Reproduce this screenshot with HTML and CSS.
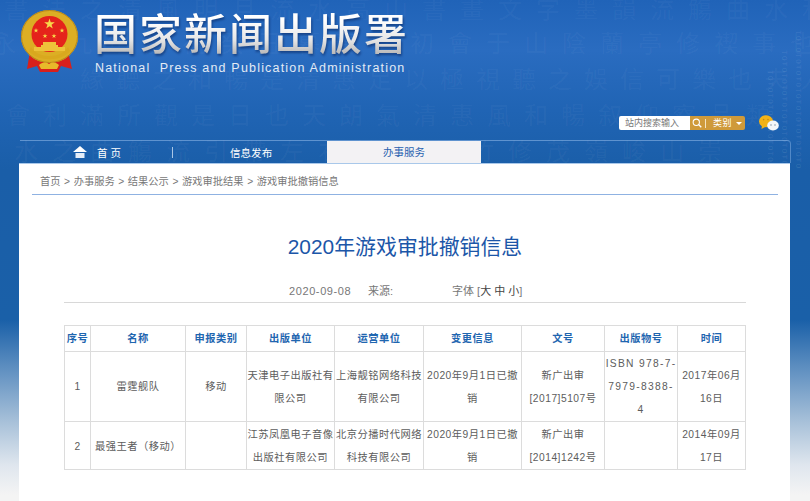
FILE: index.html
```html
<!DOCTYPE html>
<html lang="zh-CN">
<head>
<meta charset="utf-8">
<title>游戏审批撤销信息</title>
<link rel="stylesheet" href="styles.css">
</head>
<body>
<div class="page">
  <header class="masthead">
    <svg class="emblem" viewBox="0 0 58 64" aria-hidden="true">
      <defs>
        <polygon id="star" points="0,-1 .22,-.31 .95,-.31 .36,.12 .59,.81 0,.38 -.59,.81 -.36,.12 -.95,-.31 -.22,-.31" fill="#f7d94a"/>
      </defs>
      <path d="M10 42 L7 60 L17 57 L20 63 L38 63 L41 57 L52 60 L48 42 Z" fill="#d8201c"/>
      <ellipse cx="29.5" cy="27.5" rx="28.5" ry="26.5" fill="#dcae24"/>
      <ellipse cx="29.5" cy="27.5" rx="28" ry="26" fill="none" stroke="#b8881a" stroke-width="1"/>
      <ellipse cx="29.5" cy="25" rx="18" ry="18" fill="#e5231b"/>
      <use href="#star" transform="translate(29.5 15) scale(5.6)"/>
      <use href="#star" transform="translate(16 21.5) scale(2.6)"/>
      <use href="#star" transform="translate(25 27) scale(2.6)"/>
      <use href="#star" transform="translate(34 27) scale(2.6)"/>
      <use href="#star" transform="translate(42 21.5) scale(2.6)"/>
      <path d="M23 33 H36 V36 H38 V38 H45 V42 H14 V38 H21 V36 H23 Z" fill="#eec23a"/>
      <path d="M11 38 C17 50 42 50 48 38 L50 42 C42 53 17 53 9 42 Z" fill="#d9a81e"/>
      <path d="M19 56 C23 53 26 53 29 55 C32 53 35 53 39 56 L37 60 H21 Z" fill="#e8b92a"/>
    </svg>
    <div class="brand">
      <h1 class="brand-cn">国家新闻出版署</h1>
      <p class="brand-en">National  Press and Publication Administration</p>
    </div>
    <div class="tools">
      <div class="search">
        <span class="search-input">站内搜索输入</span>
        <span class="search-btn">
          <svg class="lens" viewBox="0 0 14 14" aria-hidden="true"><circle cx="6" cy="6" r="4.4" fill="none" stroke="#fff" stroke-width="1.5"/><path d="M9.2 9.2 L13 13" stroke="#fff" stroke-width="1.8"/></svg>
          <i class="search-sep"></i>
          <span class="search-cat">类别</span>
          <i class="caret"></i>
        </span>
      </div>
      <svg class="wechat" viewBox="0 0 20 16" aria-hidden="true">
        <ellipse cx="7" cy="6.2" rx="7" ry="6" fill="#f2b216"/>
        <path d="M3 10 L2.5 14 L7 11.5 Z" fill="#f2b216"/>
        <circle cx="4.6" cy="4.6" r=".8" fill="#c48a10"/><circle cx="9" cy="4.6" r=".8" fill="#c48a10"/>
        <ellipse cx="14" cy="10.5" rx="5.8" ry="5" fill="#f4f6f8"/>
        <circle cx="12" cy="10" r=".8" fill="#8a9aa8"/><circle cx="16" cy="10" r=".8" fill="#8a9aa8"/>
      </svg>
    </div>
  </header>

  <nav class="nav">
    <a class="nav-home">
      <svg class="house" viewBox="0 0 14 12" aria-hidden="true"><path d="M7 0 L14 6 H0 Z" fill="#fff"/><path d="M2.5 7 H11.5 V12 H2.5 Z" fill="#e6eef8"/></svg>
      <span class="nav-home-text">首 页</span>
    </a>
    <i class="nav-sep"></i>
    <a class="nav-info">信息发布</a>
    <a class="nav-active">办事服务</a>
  </nav>

  <main class="panel">
    <div class="crumbs">首页 &gt; 办事服务 &gt; 结果公示 &gt; 游戏审批结果 &gt; 游戏审批撤销信息</div>
    <h2 class="title">2020年游戏审批撤销信息</h2>
    <div class="meta">
      <span class="meta-date">2020-09-08</span>
      <span class="meta-source">来源:</span>
      <span>字体 [<b class="meta-size">大 中 小</b>]</span>
    </div>
    <table class="grid">
      <thead>
        <tr>
          <th class="c1">序号</th><th class="c2">名称</th><th class="c3">申报类别</th><th class="c4">出版单位</th><th class="c5">运营单位</th><th class="c6">变更信息</th><th class="c7">文号</th><th class="c8">出版物号</th><th class="c9">时间</th>
        </tr>
      </thead>
      <tbody>
        <tr class="row-a">
          <td>1</td><td>雷霆舰队</td><td>移动</td><td>天津电子出版社有<br>限公司</td><td>上海靓铭网络科技<br>有限公司</td><td>2020年9月1日已撤<br>销</td><td>新广出审<br>[2017]5107号</td><td class="isbn">ISBN 978-7-<br>7979-8388-<br>4</td><td>2017年06月<br>16日</td>
        </tr>
        <tr class="row-b">
          <td>2</td><td>最强王者（移动）</td><td></td><td>江苏凤凰电子音像<br>出版社有限公司</td><td>北京分播时代网络<br>科技有限公司</td><td>2020年9月1日已撤<br>销</td><td>新广出审<br>[2014]1242号</td><td></td><td>2014年09月<br>17日</td>
        </tr>
      </tbody>
    </table>
  </main>
</div>
</body>
</html>
```
FILE: styles.css
```css
html, body {
  margin: 0;
  padding: 0;
  height: 100%;
  overflow: hidden;
}
body {
  font-family: "Liberation Sans", "Noto Sans CJK SC", sans-serif;
  background: #fff;
}
.page {
  width: 810px;
  height: 501px;
  overflow: hidden;
  display: flex;
  flex-direction: column;
  background:
    url("data:image/svg+xml,%3Csvg xmlns='http://www.w3.org/2000/svg' width='810' height='170'%3E%3Cg fill='%23ffffff' fill-opacity='.045' font-family='Noto Sans CJK SC' font-size='24'%3E%3Ctext x='4' y='18' letter-spacing='14'%3E書法之清風明月流水高山書畫文字墨韻流觴曲水和暢惠風%3C/text%3E%3Ctext x='-8' y='52' letter-spacing='14'%3E永和九年歲在癸丑暮春之初會于山陰蘭亭修禊事也%3C/text%3E%3Ctext x='80' y='88' letter-spacing='12'%3E緣聽之和暢是清惠足以極視聽之娛信可樂也夫人%3C/text%3E%3Ctext x='6' y='124' letter-spacing='13'%3E會利滿所觀是日也天朗氣清惠風和暢叙仰察品類%3C/text%3E%3Ctext x='14' y='160' letter-spacing='14'%3E水之曲觴流引帶左右湍激林竹修茂嶺峻山崇%3C/text%3E%3C/g%3E%3Cg fill='%23ffffff' fill-opacity='.1' font-family='Liberation Mono' font-size='8'%3E%3Ctext transform='translate(768 70) rotate(90)' letter-spacing='1'%3ETOTOTOTOTOTOTOTOTOTO%3C/text%3E%3Ctext transform='translate(782 50) rotate(90)' letter-spacing='1'%3ETOTOTOTOTOTOTOTOTOTOTOTOTO%3C/text%3E%3Ctext transform='translate(796 30) rotate(90)' letter-spacing='1'%3ETOTOTOTOTOTOTOTOTOTOTOTOTOTOTOTO%3C/text%3E%3C/g%3E%3C/svg%3E") no-repeat 0 0,
    linear-gradient(180deg, #2063b8 0, #2a6cc0 50px, #2064b4 110px, #1a5ea8 170px, #1a60a8 320px, #5a8cbf 365px, #a5bfd8 420px, #dfe6ee 465px, #f4f4f4 495px);
}

/* masthead */
.masthead {
  flex: none;
  height: 140px;
  display: flex;
  align-items: flex-start;
  box-sizing: border-box;
  padding: 9px 31px 0 20px;
}
.emblem {
  flex: none;
  width: 58px;
  height: 64px;
}
.brand {
  margin-left: 16px;
  padding-top: 1px;
}
.brand-cn {
  margin: 0;
  height: 50px;
  font-size: 43px;
  line-height: 50px;
  font-weight: 500;
  letter-spacing: 2px;
  white-space: nowrap;
  color: transparent;
  background: linear-gradient(180deg, #fff 20%, #e6e6e6 60%, #b5b5b5 90%);
  -webkit-background-clip: text;
  background-clip: text;
  filter: drop-shadow(1px 2px 1px rgba(0, 20, 70, .45));
}
.brand-en {
  margin: 0;
  padding-left: 1px;
  font-size: 12.5px;
  line-height: 16px;
  letter-spacing: 1.19px;
  white-space: pre;
  color: #e3ebf5;
}
.tools {
  margin-left: auto;
  align-self: flex-end;
  display: flex;
  align-items: center;
  gap: 14px;
  padding-bottom: 9px;
}
.search {
  display: flex;
  width: 126px;
  height: 14px;
  border-radius: 2px;
  overflow: hidden;
  font-size: 9px;
  line-height: 14px;
}
.search-input {
  width: 71px;
  padding-left: 6px;
  box-sizing: border-box;
  background: #fff;
  color: #777;
  white-space: nowrap;
}
.search-btn {
  flex: 1;
  display: flex;
  align-items: center;
  background: #cf9a3a;
  color: #fff;
  padding-left: 2px;
}
.lens {
  width: 10px;
  height: 10px;
}
.search-sep {
  width: 1px;
  height: 9px;
  background: #f4e3c0;
  margin: 0 7px 0 3px;
}
.search-cat {
  letter-spacing: .4px;
}
.caret {
  margin-left: 4px;
  border: 3px solid transparent;
  border-top: 3px solid #fff;
  border-bottom: 0;
}
.wechat {
  width: 20px;
  height: 16px;
}

/* navigation */
.nav {
  flex: none;
  height: 23px;
  margin: 0 19px 0 20px;
  box-sizing: border-box;
  display: flex;
  align-items: center;
  border-top: 1px solid rgba(150, 190, 235, .55);
  border-right: 1px solid rgba(150, 190, 235, .45);
  border-top-right-radius: 4px;
  font-size: 10.5px;
  color: #fff;
}
.nav-home {
  display: flex;
  align-items: center;
  padding-left: 53px;
  width: 152px;
  box-sizing: border-box;
}
.house {
  width: 14px;
  height: 12px;
}
.nav-home-text {
  margin-left: 10px;
  white-space: pre;
}
.nav-sep {
  width: 1px;
  height: 11px;
  background: #a9c6e6;
}
.nav-info {
  margin-left: 57px;
  width: 97px;
  letter-spacing: .05px;
}
.nav-active {
  align-self: stretch;
  width: 154px;
  text-align: center;
  line-height: 22px;
  background: #f3f2f4;
  color: #2a62b0;
  letter-spacing: .05px;
}

/* panel */
.panel {
  flex: 1;
  margin: 0 20px 0 19px;
  padding: 0 12px 0 13px;
  background: #fff;
  border-top: 1px solid #a9c8ea;
  box-sizing: border-box;
  min-height: 0;
}
.crumbs {
  height: 30px;
  padding-left: 8px;
  font-size: 10.25px;
  word-spacing: .75px;
  line-height: 36px;
  color: #777;
  border-bottom: 1px solid #8fb2e2;
  white-space: nowrap;
}
.title {
  margin: 38px 0 0;
  height: 28px;
  font-size: 20.9px;
  line-height: 28px;
  font-weight: 400;
  text-align: center;
  color: #1c56a8;
}
.meta {
  margin: 21px 32px 0;
  height: 21px;
  box-sizing: border-box;
  border-bottom: 1px solid #d8d8d8;
  padding: 1px 0 0 225px;
  display: flex;
  font-size: 11px;
  line-height: 16px;
  color: #777;
}
.meta-date {
  width: 79px;
  letter-spacing: .6px;
}
.meta-source {
  width: 84px;
}
.meta-size {
  font-weight: 400;
  color: #444;
}

/* table */
.grid {
  margin: 22px 0 0 32px;
  table-layout: fixed;
  width: 681px;
  border-collapse: collapse;
  font-size: 10.25px;
  letter-spacing: .5px;
  line-height: 23px;
  color: #5c5c5c;
}
.grid th, .grid td {
  box-sizing: border-box;
  border: 1px solid #dcdcdc;
  padding: 0;
  text-align: center;
  white-space: nowrap;
  overflow: hidden;
}
.grid th {
  height: 26px;
  color: #1f66b0;
  font-weight: 700;
  line-height: 25px;
}
.grid .isbn {
  letter-spacing: 1.3px;
}
.row-a td { height: 70px; }
.row-b td { height: 47px; padding-top: 1px; }
.c1 { width: 26px; }
.c2 { width: 95px; }
.c3 { width: 61px; }
.c4 { width: 88px; }
.c5 { width: 89px; }
.c6 { width: 98px; }
.c7 { width: 83px; }
.c8 { width: 73px; }
.c9 { width: 68px; }
```
